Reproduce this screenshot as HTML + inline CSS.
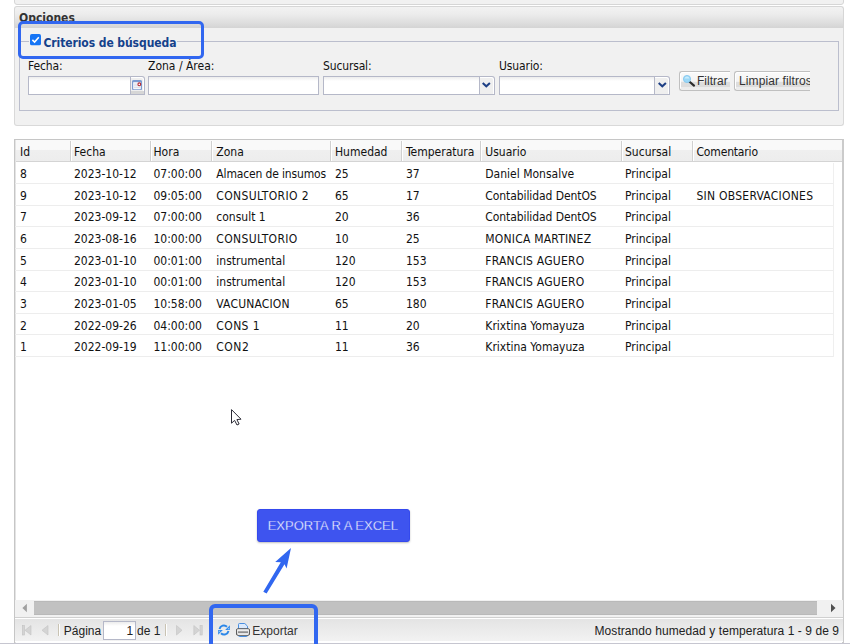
<!DOCTYPE html>
<html lang="es">
<head>
<meta charset="utf-8">
<title>Humedad y temperatura</title>
<style>
*{box-sizing:border-box;margin:0;padding:0}
html,body{width:850px;height:644px;overflow:hidden;background:#fff}
body{position:relative;font-family:"DejaVu Sans Condensed","Liberation Sans",sans-serif;font-size:12px;color:#111}
.abs{position:absolute}
.t{position:absolute;white-space:nowrap;line-height:14px;height:14px}
.ar{font-family:"Liberation Sans",sans-serif}
/* top remnants */
#prev{left:14px;top:-5px;width:830px;height:10px;background:#f1f1f1;border:1px solid #d6d6d6;border-radius:0 0 3px 3px}
#ophead{left:14px;top:6px;width:830px;height:22px;border:1px solid #d6d6d6;border-bottom:0;border-radius:3px 3px 0 0;
 background:linear-gradient(#f2f2f2 0%,#ececec 35%,#dcdcdc 80%,#d4d4d4 100%)}
#opbody{left:14px;top:28px;width:830px;height:98px;background:#f1f1f1;border:1px solid #d9d9d9;border-top:0;border-radius:0 0 3px 3px}
#fs{left:19px;top:41px;width:820px;height:70px;border:1px solid #bbbecd}
.inp{position:absolute;top:76px;height:19px;background:#fff linear-gradient(#ededed,#fff 4px);border:1px solid #b5b8c8}
.trg{position:absolute;top:76px;height:19px;width:15px;background:#efefef;border:1px solid #b5b8c8;border-left:0;border-radius:0 3px 0 0;box-shadow:inset -1px 1px 0 #fff}
.btn{position:absolute;top:71px;height:20px;border:1px solid #c0c0c0;border-right:0;border-radius:3px 0 0 3px;
 background:linear-gradient(#fafafa 0,#f4f4f4 52%,#dedede 56%,#dddddd 82%,#ececec 86%,#ededed 100%);box-shadow:inset 1px 1px 0 #fff;overflow:hidden}
/* grid */
#grid{left:14px;top:139px;width:830px;height:520px;border:1px solid #c6c6c6;border-width:1px 2px 0 1px;border-right-color:#cbcbcb;background:#fff}
#ghead{left:15px;top:140px;width:827px;height:22px;background:linear-gradient(#f9f9f9 0,#f9f9f9 45%,#efefef 50%,#ededed 100%);border-bottom:1px solid #d4d4d4}
.sep{position:absolute;top:141px;height:20px;width:2px;border-left:1px solid #d0d0d0;border-right:1px solid #fff}
.row{position:absolute;left:15px;width:819px;height:1px;background:#ededed}
.vr{position:absolute;left:833px;top:163px;width:1px;height:194px;background:#efefef}
#sb{left:15px;top:600px;width:828px;height:17px;background:#f1f1f1}
#thumb{left:34px;top:601px;width:783px;height:14px;background:#c1c1c1;border-top:1px solid #b9b9b9;border-bottom:1px solid #b9b9b9}
#tb{left:15px;top:617px;width:828px;height:25px;background:linear-gradient(#e3e3e3,#f2f2f2);border-top:1px solid #d0d0d0;border-bottom:1px solid #fff;box-shadow:inset 0 1px 0 #fff}
#bline{left:0;top:643px;width:850px;height:1px;background:#c6c6d0}
.tsep{position:absolute;top:624px;width:2px;height:12px;border-left:1px solid #c9c3b3;border-right:1px solid #fff}
</style>
</head>
<body>
<div class="abs" id="prev"></div>
<div class="abs" id="ophead"></div>
<div class="abs" id="opbody"></div>
<div class="t" style="left:19px;top:11px;height:11px;overflow:hidden;font-weight:bold;color:#333;font-size:12px">Opciones</div>
<div class="abs" id="fs"></div>
<!-- legend -->
<div class="abs" style="left:28.500px;top:32px;width:148.500px;height:18px;background:#f1f1f1"></div>
<svg class="abs" style="left:30.200px;top:34.400px" width="11" height="11.300" viewBox="0 0 12 12" preserveAspectRatio="none"><rect x="0" y="0" width="12" height="12" rx="2" fill="#1675f5"/><path d="M2.6 6.2 L5 8.6 L9.6 3.4" fill="none" stroke="#fff" stroke-width="1.7"/></svg>
<div class="t" id="legend" style="left:43.400px;top:36px;font-weight:bold;color:#15428b;font-size:12px;letter-spacing:-0.07px">Criterios de búsqueda</div>
<!-- labels -->
<div class="t" style="left:28px;top:59px;letter-spacing:-0.1px">Fecha:</div>
<div class="t" style="left:148px;top:59px">Zona / Área:</div>
<div class="t" style="left:323px;top:59px;letter-spacing:-0.15px">Sucursal:</div>
<div class="t" style="left:499px;top:59px;letter-spacing:-0.1px">Usuario:</div>
<!-- inputs -->
<div class="inp" style="left:28px;width:103px"></div>
<div class="trg" id="dtrg" style="left:131px;width:14px"></div>
<div class="inp" style="left:148px;width:171px"></div>
<div class="inp" style="left:323px;width:157px"></div>
<div class="trg" style="left:480px"></div>
<div class="inp" style="left:499px;width:156px"></div>
<div class="trg" style="left:655px"></div>
<svg class="abs" style="left:482px;top:82px" width="9" height="6" viewBox="0 0 9 6"><path d="M0.700 1 L4.300 4.300 L7.900 1" fill="none" stroke="#1d3f85" stroke-width="2"/></svg>
<svg class="abs" style="left:657.500px;top:82px" width="9" height="6" viewBox="0 0 9 6"><path d="M0.700 1 L4.300 4.300 L7.900 1" fill="none" stroke="#1d3f85" stroke-width="2"/></svg>
<!-- date trigger icon -->
<div class="abs" style="left:131px;top:90.500px;width:13px;height:3.500px;background:#d6d6d6"></div>
<svg class="abs" style="left:132.200px;top:79.600px" width="10" height="10.400" viewBox="0 0 10 10.400"><rect x="0.600" y="0.600" width="8.800" height="9.200" rx="1" fill="#fdfdfe" stroke="#7b9bd0" stroke-width="1.200"/><rect x="0.600" y="0.600" width="8.800" height="1.600" fill="#7b9bd0"/><rect x="2" y="3.600" width="3" height="1" fill="#d3d9e6"/><rect x="2" y="5.400" width="6" height="1" fill="#d3d9e6"/><rect x="2" y="7.200" width="6" height="1" fill="#d3d9e6"/><circle cx="7.300" cy="4.300" r="1.400" fill="#fff" stroke="#b32630" stroke-width="1.100"/></svg>
<!-- buttons -->
<div class="btn" style="left:679px;width:51px"></div>
<div class="btn" style="left:734px;width:75.500px"></div>
<svg class="abs" style="left:682px;top:74px" width="14" height="14" viewBox="0 0 14 14"><path d="M7.300 7.500 L12 11.600" stroke="#2b2b2b" stroke-width="2.200" stroke-linecap="round"/><circle cx="5" cy="5" r="3.600" fill="#9bd8f7" stroke="#7fc4ee" stroke-width="0.800"/><path d="M2.500 4.500 A2.600 2.600 0 0 1 7.500 4.500 Z" fill="#c9ecfc"/></svg>
<div class="t ar" style="left:697px;top:74px;color:#333">Filtrar</div>
<div class="t ar" style="left:739px;top:74px;color:#333;width:70.500px;overflow:hidden;letter-spacing:0.100px">Limpiar filtros</div>

<!-- grid -->
<div class="abs" id="grid"></div>
<div class="abs" id="ghead"></div>
<div class="abs" style="left:15px;top:140px;width:1px;height:503px;background:#e4e4e4"></div>
<div class="t" style="left:20px;top:145px">Id</div>
<div class="t" style="left:74px;top:145px">Fecha</div>
<div class="t" style="left:153.5px;top:145px">Hora</div>
<div class="t" style="left:216.3px;top:145px">Zona</div>
<div class="t" style="left:335px;top:145px">Humedad</div>
<div class="t" style="left:406px;top:145px">Temperatura</div>
<div class="t" style="left:485.3px;top:145px">Usuario</div>
<div class="t" style="left:625px;top:145px">Sucursal</div>
<div class="t" style="left:696.5px;top:145px;letter-spacing:-0.17px">Comentario</div>
<div class="sep" style="left:70px"></div>
<div class="sep" style="left:150px"></div>
<div class="sep" style="left:211px"></div>
<div class="sep" style="left:330px"></div>
<div class="sep" style="left:401px"></div>
<div class="sep" style="left:480px"></div>
<div class="sep" style="left:621px"></div>
<div class="sep" style="left:692px"></div>
<div class="row" style="top:183px"></div>
<div class="t" style="left:20px;top:167px">8</div>
<div class="t" style="left:74px;top:167px">2023-10-12</div>
<div class="t" style="left:153.5px;top:167px">07:00:00</div>
<div class="t" style="left:216.3px;top:167px;letter-spacing:-0.147px">Almacen de insumos</div>
<div class="t" style="left:335px;top:167px">25</div>
<div class="t" style="left:406px;top:167px">37</div>
<div class="t" style="left:485.3px;top:167px">Daniel Monsalve</div>
<div class="t" style="left:625px;top:167px">Principal</div>
<div class="row" style="top:205px"></div>
<div class="t" style="left:20px;top:189px">9</div>
<div class="t" style="left:74px;top:189px">2023-10-12</div>
<div class="t" style="left:153.5px;top:189px">09:05:00</div>
<div class="t" style="left:216.3px;top:189px;letter-spacing:0.375px">CONSULTORIO 2</div>
<div class="t" style="left:335px;top:189px">65</div>
<div class="t" style="left:406px;top:189px">17</div>
<div class="t" style="left:485.3px;top:189px;letter-spacing:-0.08px">Contabilidad DentOS</div>
<div class="t" style="left:625px;top:189px">Principal</div>
<div class="t" style="left:696.5px;top:189px;letter-spacing:0.25px">SIN OBSERVACIONES</div>
<div class="row" style="top:226px"></div>
<div class="t" style="left:20px;top:210px">7</div>
<div class="t" style="left:74px;top:210px">2023-09-12</div>
<div class="t" style="left:153.5px;top:210px">07:00:00</div>
<div class="t" style="left:216.3px;top:210px">consult 1</div>
<div class="t" style="left:335px;top:210px">20</div>
<div class="t" style="left:406px;top:210px">36</div>
<div class="t" style="left:485.3px;top:210px;letter-spacing:-0.08px">Contabilidad DentOS</div>
<div class="t" style="left:625px;top:210px">Principal</div>
<div class="row" style="top:248px"></div>
<div class="t" style="left:20px;top:232px">6</div>
<div class="t" style="left:74px;top:232px">2023-08-16</div>
<div class="t" style="left:153.5px;top:232px">10:00:00</div>
<div class="t" style="left:216.3px;top:232px;letter-spacing:0.35px">CONSULTORIO</div>
<div class="t" style="left:335px;top:232px">10</div>
<div class="t" style="left:406px;top:232px">25</div>
<div class="t" style="left:485.3px;top:232px;letter-spacing:0.21px">MONICA MARTINEZ</div>
<div class="t" style="left:625px;top:232px">Principal</div>
<div class="row" style="top:270px"></div>
<div class="t" style="left:20px;top:254px">5</div>
<div class="t" style="left:74px;top:254px">2023-01-10</div>
<div class="t" style="left:153.5px;top:254px">00:01:00</div>
<div class="t" style="left:216.3px;top:254px">instrumental</div>
<div class="t" style="left:335px;top:254px">120</div>
<div class="t" style="left:406px;top:254px">153</div>
<div class="t" style="left:485.3px;top:254px;letter-spacing:0.23px">FRANCIS AGUERO</div>
<div class="t" style="left:625px;top:254px">Principal</div>
<div class="row" style="top:291px"></div>
<div class="t" style="left:20px;top:275px">4</div>
<div class="t" style="left:74px;top:275px">2023-01-10</div>
<div class="t" style="left:153.5px;top:275px">00:01:00</div>
<div class="t" style="left:216.3px;top:275px">instrumental</div>
<div class="t" style="left:335px;top:275px">120</div>
<div class="t" style="left:406px;top:275px">153</div>
<div class="t" style="left:485.3px;top:275px;letter-spacing:0.23px">FRANCIS AGUERO</div>
<div class="t" style="left:625px;top:275px">Principal</div>
<div class="row" style="top:313px"></div>
<div class="t" style="left:20px;top:297px">3</div>
<div class="t" style="left:74px;top:297px">2023-01-05</div>
<div class="t" style="left:153.5px;top:297px">10:58:00</div>
<div class="t" style="left:216.3px;top:297px;letter-spacing:0.17px">VACUNACION</div>
<div class="t" style="left:335px;top:297px">65</div>
<div class="t" style="left:406px;top:297px">180</div>
<div class="t" style="left:485.3px;top:297px;letter-spacing:0.23px">FRANCIS AGUERO</div>
<div class="t" style="left:625px;top:297px">Principal</div>
<div class="row" style="top:334px"></div>
<div class="t" style="left:20px;top:319px">2</div>
<div class="t" style="left:74px;top:319px">2022-09-26</div>
<div class="t" style="left:153.5px;top:319px">04:00:00</div>
<div class="t" style="left:216.3px;top:319px;letter-spacing:0.4px">CONS 1</div>
<div class="t" style="left:335px;top:319px">11</div>
<div class="t" style="left:406px;top:319px">20</div>
<div class="t" style="left:485.3px;top:319px">Krixtina Yomayuza</div>
<div class="t" style="left:625px;top:319px">Principal</div>
<div class="row" style="top:356px"></div>
<div class="t" style="left:20px;top:340px">1</div>
<div class="t" style="left:74px;top:340px">2022-09-19</div>
<div class="t" style="left:153.5px;top:340px">11:00:00</div>
<div class="t" style="left:216.3px;top:340px;letter-spacing:0.5px">CON2</div>
<div class="t" style="left:335px;top:340px">11</div>
<div class="t" style="left:406px;top:340px">36</div>
<div class="t" style="left:485.3px;top:340px">Krixtina Yomayuza</div>
<div class="t" style="left:625px;top:340px">Principal</div>
<div class="vr"></div>
<div class="abs" id="sb"></div>
<div class="abs" id="thumb"></div>
<div class="abs" id="tb"></div>
<div class="abs" id="bline"></div>

<!-- scrollbar arrows -->
<svg class="abs" style="left:16px;top:600px" width="826" height="16" viewBox="0 0 826 16">
<path d="M6.400 8 L10.900 3.800 L10.900 12.200 Z" fill="#a0a0a0"/>
<path d="M819.500 8 L815 3.800 L815 12.200 Z" fill="#505050"/>
</svg>
<!-- paging toolbar -->
<svg class="abs" style="left:16px;top:617px" width="300" height="26" viewBox="16 617 300 26">
<g fill="#d4d4d4" stroke="#c2c2c2" stroke-width="0.600">
<rect x="22.300" y="625.500" width="2.200" height="9.500"/>
<path d="M31 625.500 L31 635 L25 630.250 Z"/>
<path d="M48 625.500 L48 635 L42 630.250 Z"/>
<path d="M176.500 625.500 L176.500 635 L182 630.250 Z"/>
<path d="M193.800 625.500 L193.800 635 L199.500 630.250 Z"/>
<rect x="200" y="625.500" width="2.200" height="9.500"/>
</g>
</svg>
<div class="tsep" style="left:58px"></div>
<div class="tsep" style="left:165px"></div>
<div class="t ar" style="left:63.800px;top:624px;color:#222">Página</div>
<div class="abs" style="left:103px;top:621px;width:33px;height:19px;background:#fff linear-gradient(#ececec,#fff 4px);border:1px solid #b5b8c8"></div>
<div class="t ar" style="left:126.500px;top:624px;color:#222">1</div>
<div class="t ar" style="left:137px;top:624px;color:#222">de 1</div>
<!-- refresh icon -->
<svg class="abs" style="left:218px;top:624px" width="12" height="12" viewBox="0 0 12 12">
<g fill="none" stroke="#2a86e8" stroke-width="1.900">
<path d="M1.500 5 A4.500 4.500 0 0 1 9 2.700"/>
<path d="M10.500 7 A4.500 4.500 0 0 1 3 9.300"/>
</g>
<path d="M11.900 1.300 L11.900 6 L7.200 6 Z" fill="#2f8aec"/>
<path d="M11.200 3.600 L11.200 5.300 L9.500 5.300 Z" fill="#a9d4fb"/>
<path d="M0.100 10.700 L0.100 6 L4.800 6 Z" fill="#2f8aec"/>
<path d="M0.800 8.400 L0.800 6.700 L2.500 6.700 Z" fill="#a9d4fb"/>
</svg>
<!-- printer icon -->
<svg class="abs" style="left:236px;top:623px" width="14" height="14" viewBox="0 0 14 14">
<defs><linearGradient id="pg" x1="0" y1="0" x2="0" y2="1"><stop offset="0" stop-color="#fbfbfb"/><stop offset="0.450" stop-color="#e2e2e2"/><stop offset="1" stop-color="#cfcfcf"/></linearGradient></defs>
<path d="M2.500 5.800 L2.500 1.400 Q2.500 0.500 3.500 0.500 L8.800 0.500 L11.500 3.200 L11.500 5.800 Z" fill="#dbe9fb" stroke="#4a8fe0" stroke-width="1"/>
<path d="M2.300 11.500 Q2.300 13.400 3.900 13.400 L10.100 13.400 Q11.700 13.400 11.700 11.500 Z" fill="#eaf2fd" stroke="#4a8fe0" stroke-width="1.100"/>
<rect x="0.500" y="5.700" width="13" height="6.600" rx="1.300" fill="url(#pg)" stroke="#5c5c5c" stroke-width="1"/>
<rect x="2" y="8.300" width="10" height="1.700" fill="#8e8e8e"/>
<rect x="2" y="10.600" width="10" height="1.200" fill="#f4f4f4"/>
</svg>
<div class="t ar" style="left:252.300px;top:624px;color:#333">Exportar</div>
<div class="t ar" id="status" style="left:594.500px;top:624px;color:#222;letter-spacing:0.075px">Mostrando humedad y temperatura 1 - 9 de 9</div>

<!-- annotations -->
<div class="abs" style="left:17.500px;top:21px;width:186.500px;height:38.300px;border:3.800px solid #3167f0;border-radius:5px"></div>
<div class="abs" style="left:209.200px;top:604.200px;width:108.500px;height:50px;border:4px solid #3167f0;border-radius:6px"></div>
<div class="abs" style="left:257px;top:509.300px;width:153px;height:32.300px;background:#3e54ef;border:1px solid #3449ee;border-radius:3px;box-shadow:0 1px 2px rgba(0,0,0,.25)"></div>
<div class="t ar" id="excel" style="left:267.700px;top:517.500px;height:16px;line-height:16px;font-size:13px;color:#fff;font-weight:normal;letter-spacing:0;-webkit-text-stroke:0.300px #3e54ef">EXPORTA R A EXCEL</div>
<svg class="abs" style="left:255px;top:540px" width="50" height="60" viewBox="255 540 50 60">
<path d="M291 547.900 L286.600 568.400 L284.500 564.200 L266.600 593.600 L263.300 591.700 L280.800 562.200 L275.200 561.900 Z" fill="#3167f0"/>
</svg>
<!-- cursor -->
<svg class="abs" style="left:228px;top:406px" width="18" height="24" viewBox="228 406 18 24">
<path d="M231.500 409.600 L231.500 423.200 L234.600 420.400 L237 425 L239.100 424 L236.900 419.600 L241 419.200 Z" fill="#fff" stroke="#2a2a35" stroke-width="1" stroke-linejoin="miter"/>
</svg>
</body>
</html>
